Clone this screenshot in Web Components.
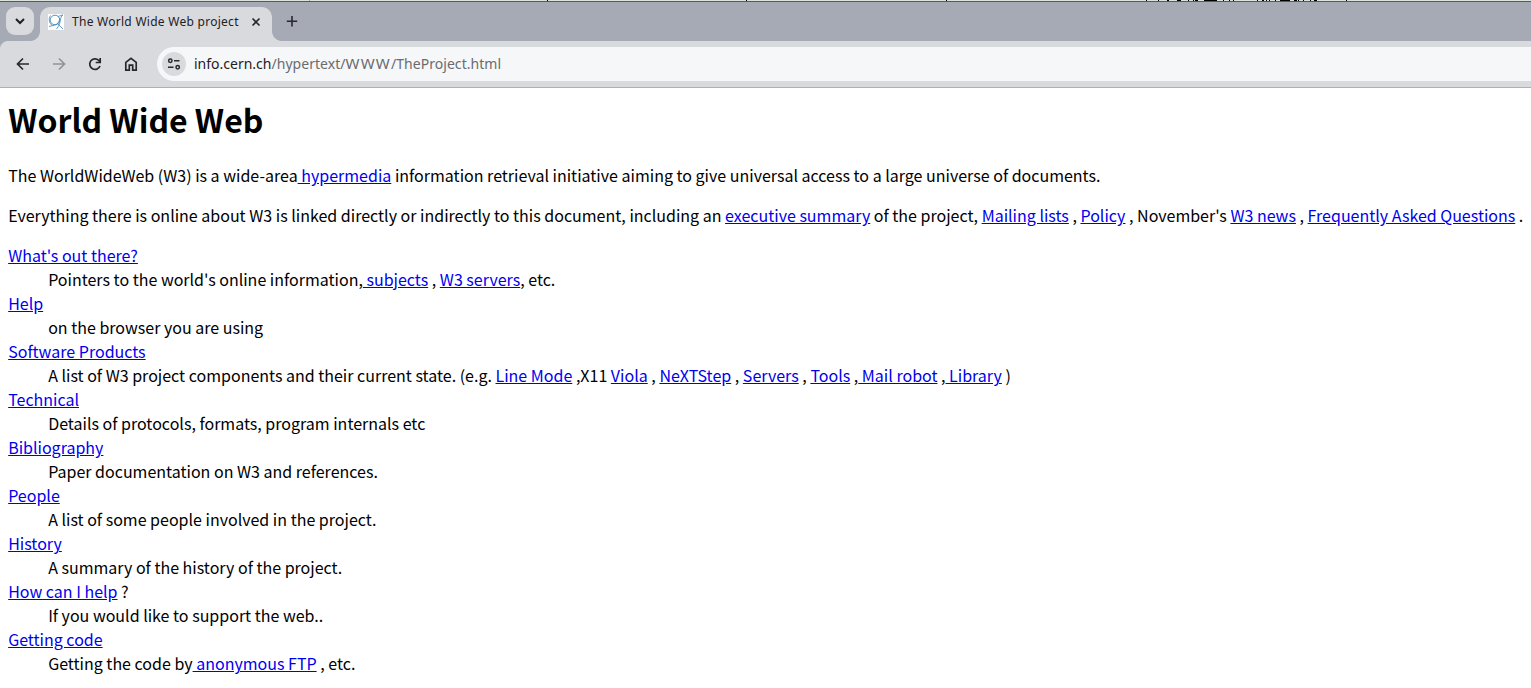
<!DOCTYPE html>
<html lang="en">
<head>
<meta charset="utf-8">
<title>The World Wide Web project</title>
<style>
    html, body {
        margin: 0;
        height: 100%;
        overflow: hidden;
        background: #fff;
    }
    .wide {
        font-size: 15px;
        line-height: 0;
        letter-spacing: 1.2px;
    }
</style>
</head>
<body>
<browser-window>
    <window-edge slot="edge"></window-edge>
    <tab-strip slot="tabs">
        <browser-tab>The World Wide Web project</browser-tab>
    </tab-strip>
    <browser-toolbar slot="toolbar">
        <address-bar>
            <span slot="host">info.cern.ch</span>
            <span slot="path">/hypertext/<span class="wide">WWW</span>/TheProject.html</span>
        </address-bar>
    </browser-toolbar>
    <project-page></project-page>
</browser-window>

<script>
class BrowserWindow extends HTMLElement {
    constructor() {
        super();
        this.attachShadow({ mode: 'open' });
        this.shadowRoot.innerHTML = `
            <style>
                :host {
                    display: flex;
                    flex-direction: column;
                    height: 100vh;
                    overflow: hidden;
                }
            </style>
            <slot name="edge"></slot>
            <slot name="tabs"></slot>
            <slot name="toolbar"></slot>
            <slot></slot>
        `;
    }
}

// The sliver of the desktop that shows above the window frame
class WindowEdge extends HTMLElement {
    constructor() {
        super();
        this.attachShadow({ mode: 'open' });
        const marks = [
            [309, 1], [547, 1], [746, 1], [946, 1], [1146, 1], [1158, 1],
            [1167, 2], [1177, 4], [1188, 1], [1193, 1], [1195, 3],
            [1204, 13], [1223, 1], [1229, 1], [1233, 1], [1257, 1],
            [1262, 2], [1266, 1], [1269, 1], [1275, 1], [1280, 10],
            [1294, 3], [1298, 1], [1303, 1], [1310, 1], [1314, 3], [1346, 1]
        ];
        this.shadowRoot.innerHTML = `
            <style>
                :host {
                    display: block;
                    flex: none;
                    height: 1px;
                    background: #dce2dc;
                    border-bottom: 1px solid #55585c;
                }
                svg {
                    display: block;
                }
            </style>
            <svg width="1531" height="1" shape-rendering="crispEdges">
                ${marks.map(([x, w]) => `<rect x="${x}" width="${w}" height="1" fill="${x === 309 ? '#aaa' : '#000'}"/>`).join('')}
            </svg>
        `;
    }
}

class TabStrip extends HTMLElement {
    constructor() {
        super();
        this.attachShadow({ mode: 'open' });
        this.shadowRoot.innerHTML = `
            <style>
                :host {
                    display: flex;
                    flex: none;
                    box-sizing: border-box;
                    height: 39px;
                    padding: 5px 0 0 6px;
                    background: #a6aab5;
                }
                button {
                    display: flex;
                    align-items: center;
                    justify-content: center;
                    width: 28px;
                    height: 28px;
                    padding: 0;
                    border: 0;
                    background: none;
                }
                .search {
                    margin-right: 6px;
                    border-radius: 9px;
                    background: #d9dade;
                }
                .add {
                    margin-left: 6px;
                }
            </style>
            <button class="search" aria-label="Search tabs">
                <svg width="28" height="28" fill="none" stroke="#1f2023" stroke-width="2"><path d="M10 12l4 4 4-4"/></svg>
            </button>
            <slot></slot>
            <button class="add" aria-label="New tab">
                <svg width="28" height="28" fill="none" stroke="#27282c" stroke-width="1.6"><path d="M14 9v10.400M8.800 14.200h10.400"/></svg>
            </button>
        `;
    }
}

class BrowserTab extends HTMLElement {
    constructor() {
        super();
        this.attachShadow({ mode: 'open' });
        this.shadowRoot.innerHTML = `
            <style>
                :host {
                    position: relative;
                    display: flex;
                    align-items: center;
                    box-sizing: border-box;
                    width: 232px;
                    height: 34px;
                    padding: 0 8px 4px;
                    border-radius: 10px 10px 0 0;
                    background: #d9dade;
                    color: #1f2023;
                    font: 12px/18px "Noto Sans", sans-serif;
                }
                :host::before,
                :host::after {
                    content: "";
                    position: absolute;
                    bottom: 0;
                    width: 10px;
                    height: 10px;
                }
                :host::before {
                    left: -10px;
                    background: radial-gradient(circle at 0 0, transparent 9.500px, #d9dade 10.500px);
                }
                :host::after {
                    right: -10px;
                    background: radial-gradient(circle at 100% 0, transparent 9.500px, #d9dade 10.500px);
                }
                .title {
                    flex: 1;
                    margin-left: 8px;
                    white-space: nowrap;
                    letter-spacing: .27px;
                }
                svg {
                    flex: none;
                }
            </style>
            <svg width="16" height="16" fill="none">
                <rect width="16" height="16" fill="#fff"/>
                <g stroke="#4387b4" stroke-width=".9">
                    <circle cx="7" cy="6" r="4.800"/>
                    <path d="M2.500 1.500C0 5 1.500 10 4.500 11.500M11.500 4C12 8 9 11 5 11.500M1 12.500l4-1M15 1C11 3 14 9 8.500 15M9.500 9.500L15 15M10 2.500L15 .8" stroke-width=".8"/>
                </g>
            </svg>
            <span class="title"><slot></slot></span>
            <svg width="16" height="16" fill="none" stroke="#27282c" stroke-width="1.600"><path d="M4.500 4.500l7 7M11.500 4.500l-7 7"/></svg>
        `;
    }
}

class BrowserToolbar extends HTMLElement {
    constructor() {
        super();
        this.attachShadow({ mode: 'open' });
        this.shadowRoot.innerHTML = `
            <style>
                :host {
                    display: flex;
                    flex: none;
                    align-items: center;
                    box-sizing: border-box;
                    height: 47px;
                    padding-left: 13px;
                    border-bottom: 1px solid #afb0b4;
                    background: radial-gradient(circle at 8px 8px, #d9dade 7.500px, #a6aab5 8.500px) 0 0 / 8px 8px no-repeat #d9dade;
                }
                nav {
                    display: flex;
                    gap: 16px;
                    margin-right: 16px;
                }
                svg {
                    display: block;
                    fill: none;
                    stroke: #27282c;
                    stroke-width: 1.700;
                }
                .off {
                    stroke: #939498;
                }
                slot {
                    display: flex;
                    flex: 1;
                }
            </style>
            <nav>
                <svg width="20" height="20"><path d="M16 10H5M10 4.500L4.500 10l5.500 5.500"/></svg>
                <svg class="off" width="20" height="20"><path d="M4 10h11M10 4.500l5.500 5.500-5.500 5.500"/></svg>
                <svg width="20" height="20"><path d="M15 12a5.300 5.300 0 1 1-1.300-5.700l1.300 1.500M15.200 4v4.500h-4.500"/></svg>
                <svg width="20" height="20"><path d="M4.800 8.300L10 4.300l5.200 4v7.900h-3.500v-5H8.300v5H4.800z"/></svg>
            </nav>
            <slot></slot>
        `;
    }
}

class AddressBar extends HTMLElement {
    constructor() {
        super();
        this.attachShadow({ mode: 'open' });
        this.shadowRoot.innerHTML = `
            <style>
                :host {
                    display: flex;
                    flex: 1;
                    align-items: center;
                    height: 34px;
                    padding-left: 5px;
                    border-radius: 17px 0 0 17px;
                    background: #f6f7f9;
                    color: #1f2023;
                    font: 14px/20px "Noto Sans", sans-serif;
                }
                .site {
                    width: 24px;
                    height: 24px;
                    margin-right: 8px;
                    border-radius: 50%;
                    background: #d9dade;
                }
                .url {
                    white-space: nowrap;
                }
                .path {
                    color: #6a6b6f;
                    letter-spacing: .04px;
                }
            </style>
            <svg class="site" fill="none" stroke="#27282c" stroke-width="1.500">
                <circle cx="8.300" cy="8.800" r="1.700"/>
                <path d="M12 8.800h5.500M6 15.200h5.500"/>
                <circle cx="15.700" cy="15.200" r="1.700"/>
            </svg>
            <span class="url"><slot name="host"></slot><span class="path"><slot name="path"></slot></span></span>
        `;
    }
}

class ProjectPage extends HTMLElement {
    constructor() {
        super();
        this.attachShadow({ mode: 'open' });
        this.shadowRoot.innerHTML = `
            <style>
                :host {
                    display: block;
                    flex: 1;
                    padding: 8px 8px 8px 8.150px;
                    background: #fff;
                    color: #000;
                    font: 16px "Noto Sans CJK SC", sans-serif;
                    letter-spacing: .003px;
                }
                h1 {
                    margin: 0 0 21.440px;
                    font-size: 32px;
                }
                p {
                    margin: 0 0 16px;
                    white-space: nowrap;
                }
                dl {
                    margin: 0;
                }
                dd {
                    margin-left: 40px;
                }
                a {
                    color: #0000ee;
                    text-decoration: underline;
                }
            </style>
            <h1>World Wide Web</h1>
            <p>The WorldWideWeb (W3) is a wide-area<a href="#"> hypermedia</a> information retrieval initiative aiming to give universal access to a large universe of documents.</p>
            <p>Everything there is online about W3 is linked directly or indirectly to this document, including an <a href="#">executive summary</a> of the project, <a href="#">Mailing lists</a> , <a href="#">Policy</a> , November's <a href="#">W3 news</a> , <a href="#">Frequently Asked Questions</a> .</p>
            <dl>
                <dt><a href="#">What's out there?</a></dt>
                <dd>Pointers to the world's online information,<a href="#"> subjects</a> , <a href="#">W3 servers</a>, etc.</dd>
                <dt><a href="#">Help</a></dt>
                <dd>on the browser you are using</dd>
                <dt><a href="#">Software Products</a></dt>
                <dd>A list of W3 project components and their current state. (e.g. <a href="#">Line Mode</a> ,X11 <a href="#">Viola</a> , <a href="#">NeXTStep</a> , <a href="#">Servers</a> , <a href="#">Tools</a> ,<a href="#"> Mail robot</a> ,<a href="#"> Library</a> )</dd>
                <dt><a href="#">Technical</a></dt>
                <dd>Details of protocols, formats, program internals etc</dd>
                <dt><a href="#">Bibliography</a></dt>
                <dd>Paper documentation on W3 and references.</dd>
                <dt><a href="#">People</a></dt>
                <dd>A list of some people involved in the project.</dd>
                <dt><a href="#">History</a></dt>
                <dd>A summary of the history of the project.</dd>
                <dt><a href="#">How can I help</a> ?</dt>
                <dd>If you would like to support the web..</dd>
                <dt><a href="#">Getting code</a></dt>
                <dd>Getting the code by<a href="#"> anonymous FTP</a> , etc.</dd>
            </dl>
        `;
    }
}

customElements.define('browser-window', BrowserWindow);
customElements.define('window-edge', WindowEdge);
customElements.define('tab-strip', TabStrip);
customElements.define('browser-tab', BrowserTab);
customElements.define('browser-toolbar', BrowserToolbar);
customElements.define('address-bar', AddressBar);
customElements.define('project-page', ProjectPage);
</script>
</body>
</html>
